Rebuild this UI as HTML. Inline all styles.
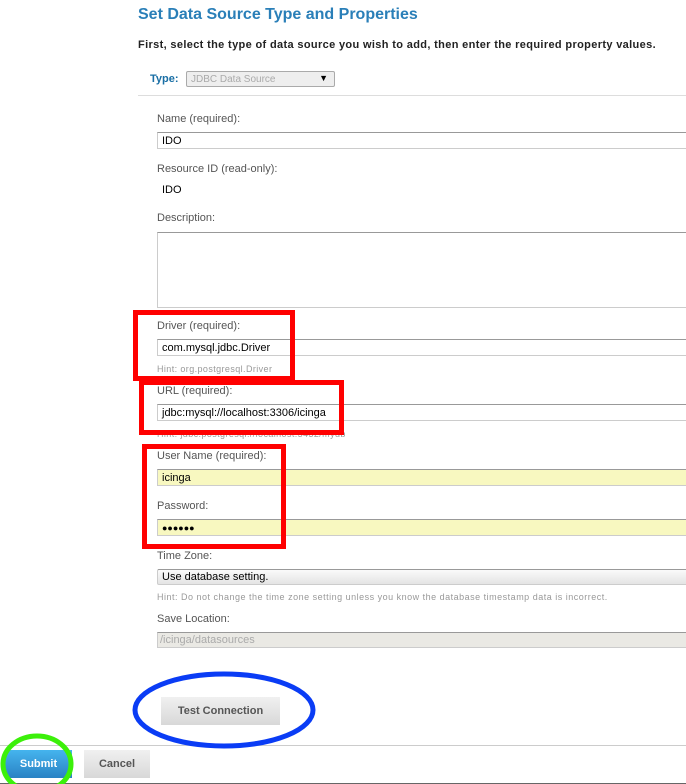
<!DOCTYPE html>
<html><head><style>
body{margin:0;width:686px;height:784px;overflow:hidden;background:#fff;font-family:"Liberation Sans",sans-serif;position:relative}
.a{position:absolute}
.l{position:absolute;left:157px;font-size:11px;color:#555}
.i{position:absolute;left:157px;width:540px;height:17px;border:1px solid #ccc;border-top-color:#999;background:#fff;font-size:11px;color:#000;box-sizing:border-box;padding:2px 4px;line-height:12px}
.h{position:absolute;left:157px;font-size:9px;color:#999;letter-spacing:.4px}
.btn{position:absolute;background:linear-gradient(#f0f0f0,#d8d8d8);font-size:11px;font-weight:bold;color:#555;text-align:center}
</style></head><body>
<div class="a" style="left:138px;top:6px;font-size:16px;font-weight:bold;color:#2a7fb8">Set Data Source Type and Properties</div>
<div class="a" style="left:138px;top:39px;font-size:11px;font-weight:bold;color:#222;letter-spacing:.35px">First, select the type of data source you wish to add, then enter the required property values.</div>
<div class="a" style="left:150px;top:73px;font-size:11px;font-weight:bold;color:#1a6fa5">Type:</div>
<div class="a" style="left:186px;top:71px;width:149px;height:16px;border:1px solid #aaa;border-radius:2px;background:#eee;box-sizing:border-box;font-size:10px;color:#aaa;padding:2px 4px">JDBC Data Source<span style="position:absolute;right:6px;top:1px;color:#000;font-size:9px">▼</span></div>
<div class="a" style="left:138px;top:95px;width:548px;height:1px;background:#ddd"></div>
<div class="l" style="top:113px">Name (required):</div>
<div class="i" style="top:132px">IDO</div>
<div class="l" style="top:163px">Resource ID (read-only):</div>
<div class="a" style="left:162px;top:184px;font-size:11px">IDO</div>
<div class="l" style="top:212px">Description:</div>
<div class="i" style="top:232px;height:76px"></div>
<div class="l" style="top:320px">Driver (required):</div>
<div class="i" style="top:339px">com.mysql.jdbc.Driver</div>
<div class="h" style="top:364px">Hint: org.postgresql.Driver</div>
<div class="l" style="top:385px">URL (required):</div>
<div class="i" style="top:404px">jdbc:mysql://localhost:3306/icinga</div>
<div class="h" style="top:429px">Hint: jdbc:postgresql://localhost:5432/mydb</div>
<div class="l" style="top:450px">User Name (required):</div>
<div class="i" style="top:469px;background:#f8f8c0">icinga</div>
<div class="l" style="top:500px">Password:</div>
<div class="i" style="top:519px;background:#f8f8c0;font-size:9px">●●●●●●</div>
<div class="l" style="top:550px">Time Zone:</div>
<div class="i" style="top:569px;height:16px;background:linear-gradient(#fafafa,#e4e4e4);border-radius:2px;padding:1px 4px">Use database setting.</div>
<div class="h" style="top:592px;font-size:9px;letter-spacing:.5px">Hint: Do not change the time zone setting unless you know the database timestamp data is incorrect.</div>
<div class="l" style="top:613px">Save Location:</div>
<div class="i" style="top:632px;height:16px;background:#eae9e4;color:#aaa;padding:1px 2px">/icinga/datasources</div>
<div class="btn" style="left:161px;top:697px;width:119px;height:28px;line-height:28px">Test Connection</div>
<div class="a" style="left:0;top:745px;width:686px;height:1px;background:#ccc"></div>
<div class="btn" style="left:5px;top:750px;width:67px;height:28px;line-height:28px;background:linear-gradient(#45b4ee,#2a82c4);color:#fff">Submit</div>
<div class="btn" style="left:84px;top:750px;width:66px;height:28px;line-height:28px">Cancel</div>
<div class="a" style="left:0;top:783px;width:686px;height:1px;background:#666"></div>
<svg class="a" style="left:0;top:0" width="686" height="784">
<rect x="135.5" y="312.5" width="157" height="66" fill="none" stroke="#f00" stroke-width="5"/>
<rect x="141.5" y="382.5" width="200" height="50" fill="none" stroke="#f00" stroke-width="5"/>
<rect x="144.5" y="446.5" width="139" height="100" fill="none" stroke="#f00" stroke-width="5"/>
<ellipse cx="224" cy="710" rx="89" ry="36" fill="none" stroke="#0a3cf5" stroke-width="5"/>
<ellipse cx="37" cy="764" rx="34" ry="28" fill="none" stroke="#3cf00a" stroke-width="5"/>
</svg>
</body></html>
